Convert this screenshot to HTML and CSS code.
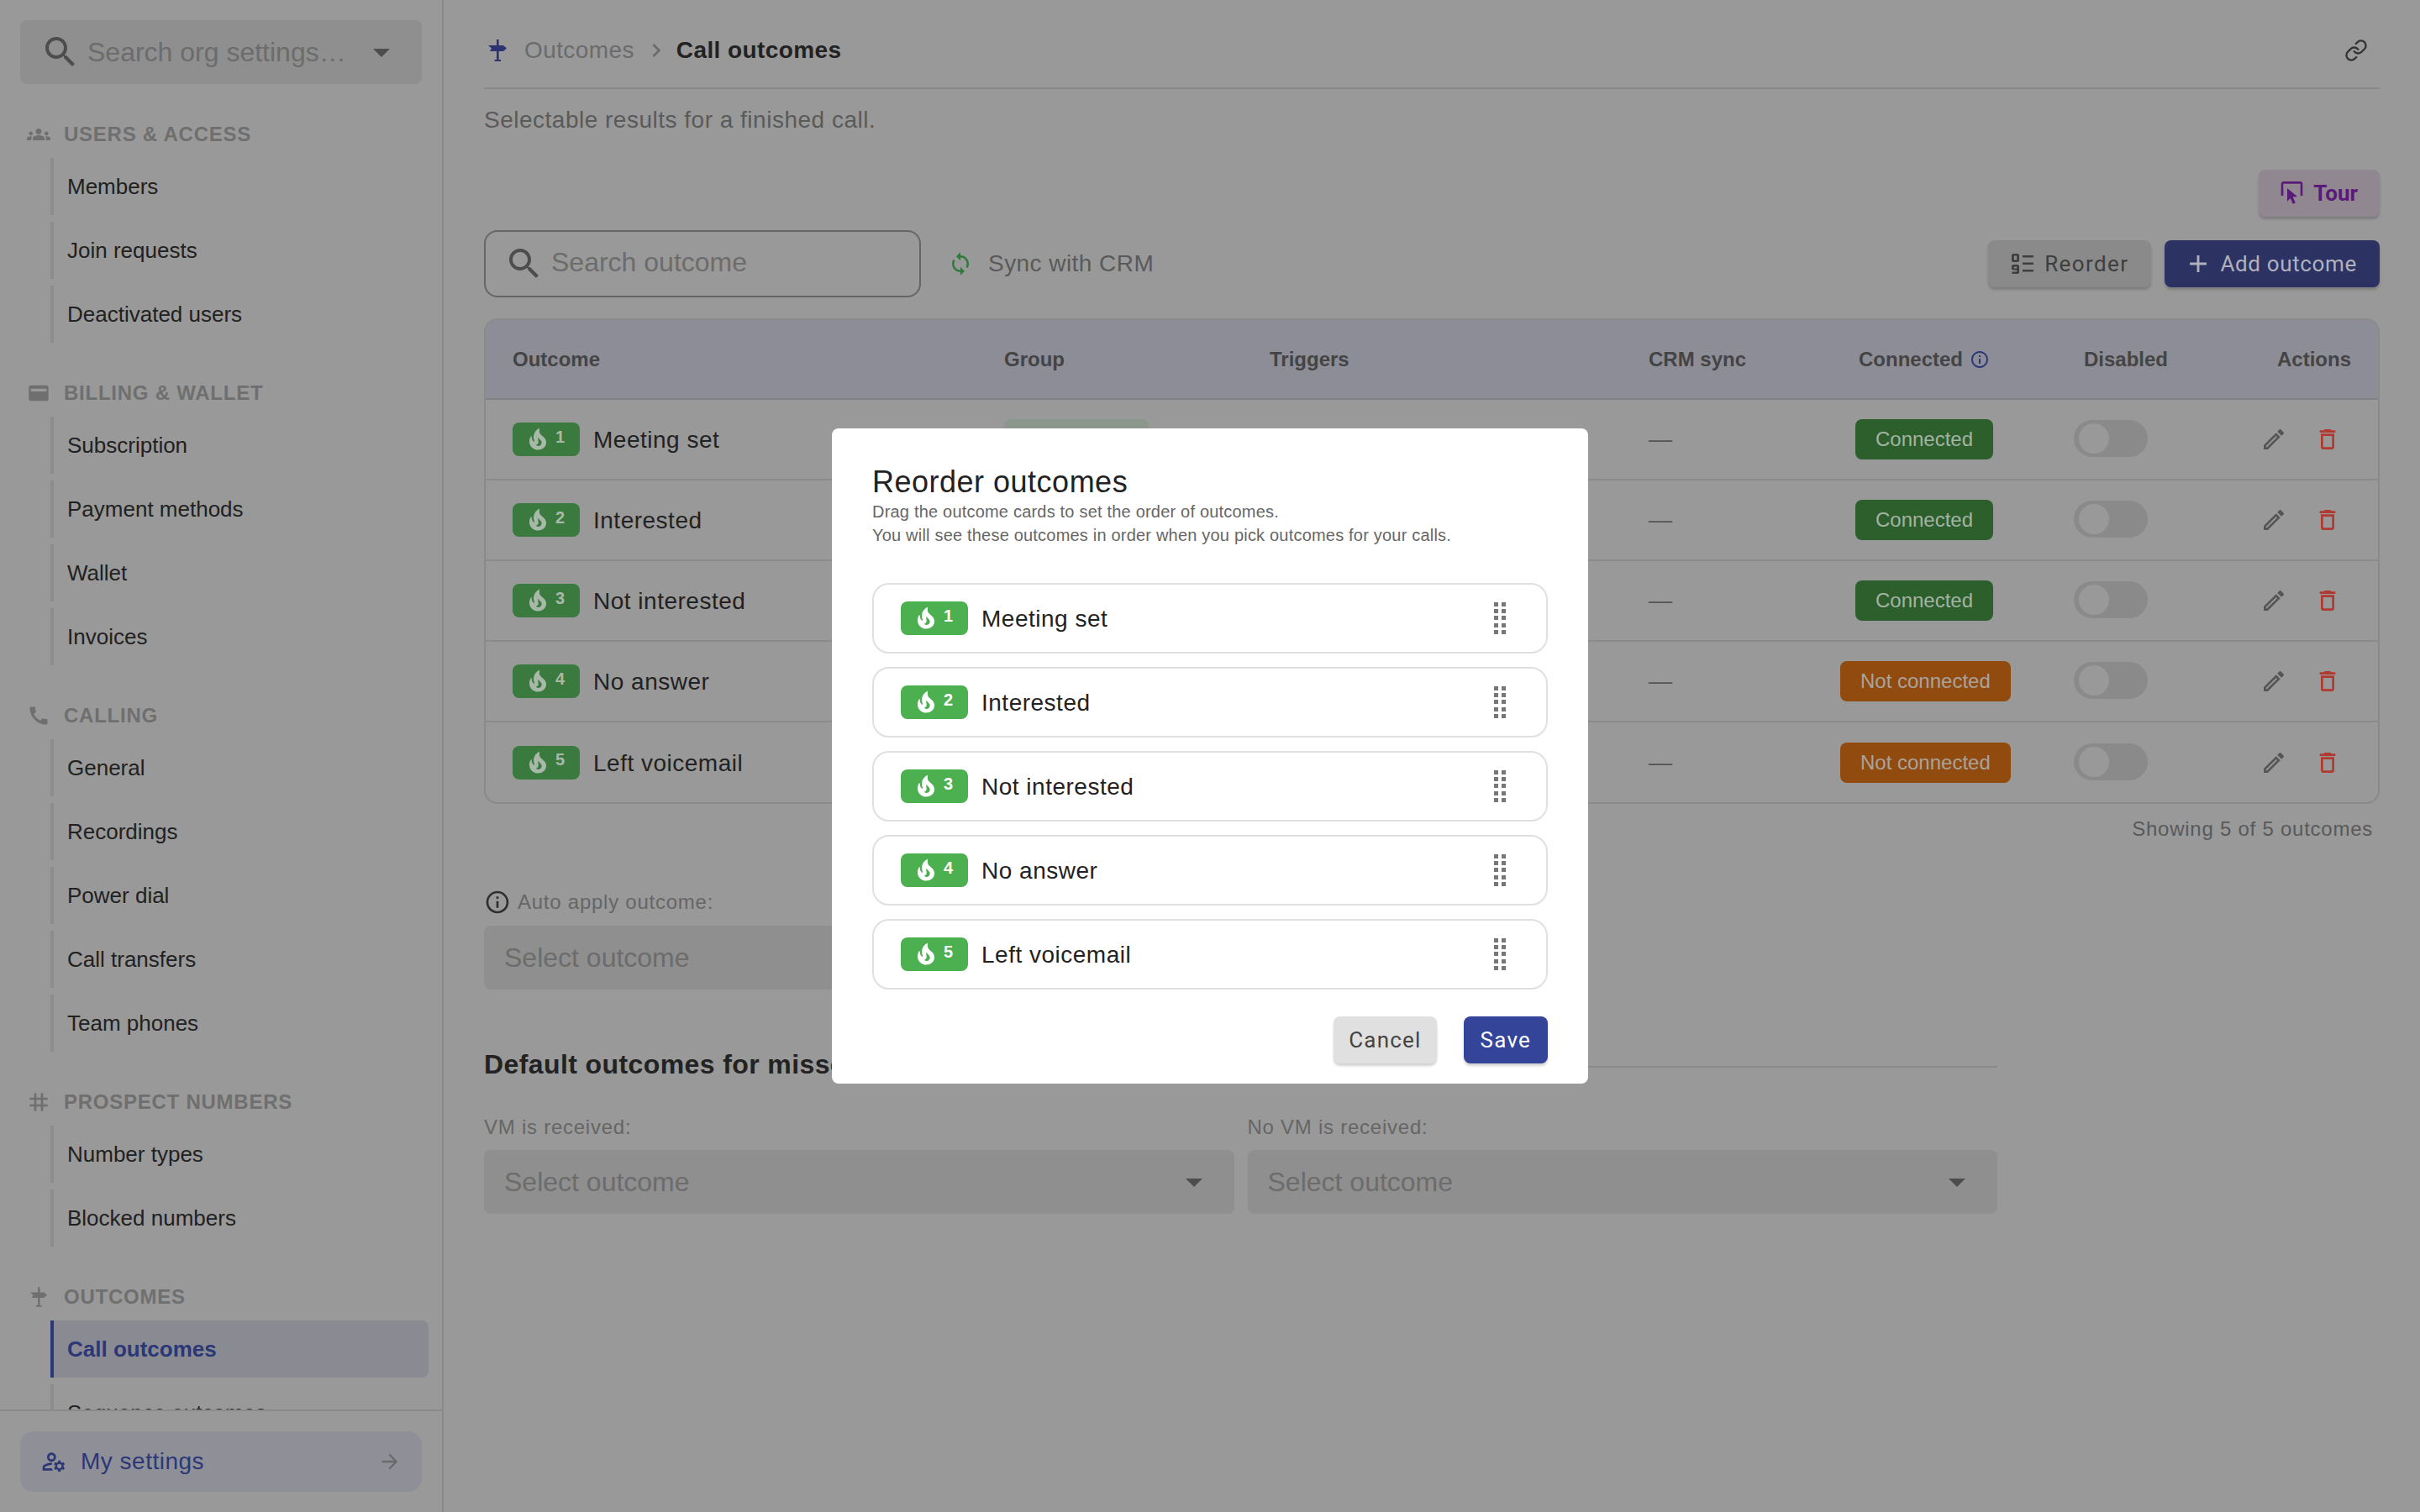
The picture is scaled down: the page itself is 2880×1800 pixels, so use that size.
FILE: index.html
```html
<!DOCTYPE html>
<html lang="en">
<head>
    <meta charset="UTF-8">
    <title>Call outcomes</title>
    <link rel="stylesheet" href="styles.css">
</head>
<body>
    <svg class="sprite" aria-hidden="true">
        <symbol id="i-search" viewBox="0 0 24 24"><path d="M15.5 14h-.79l-.28-.27C15.41 12.59 16 11.11 16 9.5 16 5.91 13.09 3 9.5 3S3 5.91 3 9.5 5.91 16 9.5 16c1.61 0 3.09-.59 4.23-1.57l.27.28v.79l5 4.99L20.49 19l-4.99-5zm-6 0C7.01 14 5 11.99 5 9.5S7.01 5 9.5 5 14 7.01 14 9.5 11.99 14 9.5 14z"/></symbol>
        <symbol id="i-drop" viewBox="0 0 24 24"><path d="M7 10l5 5 5-5z"/></symbol>
        <symbol id="i-groups" viewBox="0 0 24 24"><path d="M12 12.75c1.63 0 3.07.39 4.24.9 1.08.48 1.76 1.56 1.76 2.73V18H6v-1.61c0-1.18.68-2.26 1.76-2.73 1.17-.52 2.61-.91 4.24-.91zM4 13c1.1 0 2-.9 2-2s-.9-2-2-2-2 .9-2 2 .9 2 2 2zm1.13 1.1c-.37-.06-.74-.1-1.13-.1-.99 0-1.93.21-2.78.58C.48 14.9 0 15.62 0 16.43V18h4.5v-1.61c0-.83.23-1.61.63-2.29zM20 13c1.1 0 2-.9 2-2s-.9-2-2-2-2 .9-2 2 .9 2 2 2zm4 3.43c0-.81-.48-1.53-1.22-1.85-.85-.37-1.79-.58-2.78-.58-.39 0-.76.04-1.13.1.4.68.63 1.46.63 2.29V18H24v-1.57zM12 6c1.66 0 3 1.34 3 3s-1.34 3-3 3-3-1.34-3-3 1.34-3 3-3z"/></symbol>
        <symbol id="i-card" viewBox="0 0 24 24"><path fill-rule="evenodd" d="M4 4h16c1.1 0 2 .9 2 2v12c0 1.1-.9 2-2 2H4c-1.1 0-2-.9-2-2V6c0-1.1.9-2 2-2zm0 3.500v2.700h16V7.500z"/></symbol>
        <symbol id="i-call" viewBox="0 0 24 24"><path d="M20.01 15.38c-1.23 0-2.42-.2-3.53-.56-.35-.12-.74-.03-1.01.24l-1.57 1.97c-2.83-1.35-5.48-3.9-6.89-6.83l1.95-1.66c.27-.28.35-.67.24-1.02-.37-1.11-.56-2.3-.56-3.53 0-.54-.45-.99-.99-.99H4.19C3.65 3 3 3.24 3 3.99 3 13.28 10.73 21 20.01 21c.71 0 .99-.63.99-1.18v-3.45c0-.54-.45-.99-.99-.99z"/></symbol>
        <symbol id="i-tag" viewBox="0 0 24 24"><path d="M20 10V8h-4V4h-2v4h-4V4H8v4H4v2h4v4H4v2h4v4h2v-4h4v4h2v-4h4v-2h-4v-4h4zm-6 4h-4v-4h4v4z"/></symbol>
        <symbol id="i-sign" viewBox="0 0 22 26"><path d="M10 0h2.600v7H18l4 3.400L18 14h-5.400v10H15v2H7.600v-2H10V14H2l2-3.600L0 7h10z"/></symbol>
        <symbol id="i-manage" viewBox="0 0 24 24"><path d="M4 18v-.65c0-.34.16-.66.41-.81C6.1 15.53 8.03 15 10 15c.03 0 .05 0 .08.01.1-.7.3-1.37.59-1.98-.22-.02-.44-.03-.67-.03-2.42 0-4.68.67-6.61 1.82-.88.52-1.39 1.5-1.39 2.53V20h9.26c-.42-.6-.75-1.28-.97-2H4zM10 12c2.21 0 4-1.79 4-4s-1.79-4-4-4-4 1.79-4 4 1.79 4 4 4zm0-6c1.1 0 2 .9 2 2s-.9 2-2 2-2-.9-2-2 .9-2 2-2zM20.75 16c0-.22-.03-.42-.06-.63l1.14-1.01-1-1.73-1.45.49c-.32-.27-.68-.48-1.08-.63L18 11h-2l-.3 1.49c-.4.15-.76.36-1.08.63l-1.45-.49-1 1.73 1.14 1.01c-.03.21-.06.41-.06.63s.03.42.06.63l-1.14 1.01 1 1.73 1.45-.49c.32.27.68.48 1.08.63L16 21h2l.3-1.49c.4-.15.76-.36 1.08-.63l1.45.49 1-1.73-1.14-1.01c.03-.21.06-.41.06-.63zM17 18c-1.1 0-2-.9-2-2s.9-2 2-2 2 .9 2 2-.9 2-2 2z"/></symbol>
        <symbol id="i-arrow" viewBox="0 0 24 24"><path d="M12 4l-1.41 1.41L16.17 11H4v2h12.17l-5.58 5.59L12 20l8-8z"/></symbol>
        <symbol id="i-chevron" viewBox="0 0 24 24"><path d="M10 6L8.59 7.41 13.17 12l-4.58 4.59L10 18l6-6z"/></symbol>
        <symbol id="i-link" viewBox="0 0 24 24"><path fill="none" stroke="currentColor" stroke-width="2" stroke-linecap="round" stroke-linejoin="round" d="M10 13a5 5 0 0 0 7.54.54l3-3a5 5 0 0 0-7.07-7.07l-1.72 1.71M14 11a5 5 0 0 0-7.54-.54l-3 3a5 5 0 0 0 7.07 7.07l1.71-1.71"/></symbol>
        <symbol id="i-tour" viewBox="0 0 27 28"><path fill="none" stroke="currentColor" stroke-width="2.6" d="M2 17V3a1.6 1.6 0 0 1 1.6-1.6h19.8A1.6 1.6 0 0 1 25 3v14"/><path d="M8 8l12 10-5.4.6 3.2 6.800-3 1.400-3.200-6.800L8 24z"/></symbol>
        <symbol id="i-sort" viewBox="0 0 26 24"><path fill-rule="evenodd" d="M2 0h5c1 0 2 1 2 2v6c0 1-1 2-2 2H2c-1 0-2-1-2-2V2c0-1 1-2 2-2zm.8 2.400v5.200h3.400V2.400z"/><path fill-rule="evenodd" d="M2 13h5c1 0 2 1 2 2v7c0 1-1 2-2 2H.5v-2.400h5.700v-2H2c-1 0-2-1-2-2v-2.600c0-1 1-2 2-2zm.8 2.400v2.200h3.400v-2.200z"/><path d="M13 2h13v2.500H13zM13 10.500h13V13H13zM13 19h13v2.500H13z"/></symbol>
        <symbol id="i-plus" viewBox="0 0 24 24"><path d="M19 13h-6v6h-2v-6H5v-2h6V5h2v6h6v2z"/></symbol>
        <symbol id="i-sync" viewBox="0 0 24 24"><path d="M12 4V1L8 5l4 4V6c3.31 0 6 2.69 6 6 0 1.01-.25 1.97-.7 2.8l1.46 1.46C19.54 15.03 20 13.57 20 12c0-4.42-3.58-8-8-8zm0 14c-3.31 0-6-2.69-6-6 0-1.01.25-1.97.7-2.8L5.24 7.74C4.46 8.97 4 10.43 4 12c0 4.42 3.58 8 8 8v3l4-4-4-4v3z"/></symbol>
        <symbol id="i-info" viewBox="0 0 24 24"><path d="M11 7h2v2h-2zm0 4h2v6h-2zm1-9C6.48 2 2 6.48 2 12s4.48 10 10 10 10-4.48 10-10S17.52 2 12 2zm0 18c-4.41 0-8-3.59-8-8s3.59-8 8-8 8 3.59 8 8-3.59 8-8 8z"/></symbol>
        <symbol id="i-fire" viewBox="0 0 24 24"><path d="M19.48 12.35c-1.57-4.08-7.16-4.3-5.81-10.23.1-.44-.37-.78-.75-.55C9.29 3.71 6.68 8 8.87 13.62c.18.46-.36.89-.75.59-1.81-1.37-2-3.34-1.84-4.75.06-.52-.62-.77-.91-.34C4.69 10.16 4 11.84 4 14.37c.38 5.6 5.11 7.32 6.81 7.54 2.43.31 5.06-.14 6.95-1.87 2.08-1.93 2.84-5.01 1.72-7.69zm-9.28 5.03c1.44-.35 2.18-1.39 2.38-2.31.33-1.43-.96-2.83-.09-5.09.33 1.87 3.27 3.04 3.27 5.08.08 2.53-2.66 4.7-5.56 2.32z"/></symbol>
        <symbol id="i-edit" viewBox="0 0 24 24"><path d="M14.06 9.02l.92.92L5.92 19H5v-.92l9.06-9.06M17.66 3c-.25 0-.51.1-.7.29l-1.83 1.83 3.75 3.75 1.83-1.83c.39-.39.39-1.02 0-1.41l-2.34-2.34c-.2-.2-.45-.29-.71-.29zm-3.6 3.19L3 17.25V21h3.75L17.81 9.94l-3.75-3.75z"/></symbol>
        <symbol id="i-trash" viewBox="0 0 24 24"><path d="M6 19c0 1.1.9 2 2 2h8c1.1 0 2-.9 2-2V7H6v12zM8 9h8v10H8V9zm7.5-5l-1-1h-5l-1 1H5v2h14V4h-3.5z"/></symbol>
        <symbol id="i-handle" viewBox="0 0 14 38"><path d="M0 0h5v5H0zM9 0h5v5H9zM0 8h5v5H0zM9 8h5v5H9zM0 16h5v5H0zM9 16h5v5H9zM0 25h5v5H0zM9 25h5v5H9zM0 33h5v5H0zM9 33h5v5H9z"/></symbol>
    </svg>

    <div class="layout">
        <!-- Sidebar -->
        <aside class="sidebar">
            <div class="org-search">
                <svg class="icon-48"><use href="#i-search"/></svg>
                <span class="org-search-text">Search org settings…</span>
                <svg class="icon-48"><use href="#i-drop"/></svg>
            </div>
            <nav class="side-nav">
                <section class="nav-group">
                    <h3 class="nav-title"><svg class="icon-28"><use href="#i-groups"/></svg>USERS &amp; ACCESS</h3>
                    <a class="nav-item">Members</a>
                    <a class="nav-item">Join requests</a>
                    <a class="nav-item">Deactivated users</a>
                </section>
                <section class="nav-group">
                    <h3 class="nav-title"><svg class="icon-28"><use href="#i-card"/></svg>BILLING &amp; WALLET</h3>
                    <a class="nav-item">Subscription</a>
                    <a class="nav-item">Payment methods</a>
                    <a class="nav-item">Wallet</a>
                    <a class="nav-item">Invoices</a>
                </section>
                <section class="nav-group">
                    <h3 class="nav-title"><svg class="icon-28"><use href="#i-call"/></svg>CALLING</h3>
                    <a class="nav-item">General</a>
                    <a class="nav-item">Recordings</a>
                    <a class="nav-item">Power dial</a>
                    <a class="nav-item">Call transfers</a>
                    <a class="nav-item">Team phones</a>
                </section>
                <section class="nav-group">
                    <h3 class="nav-title"><svg class="icon-32 icon-tag"><use href="#i-tag"/></svg>PROSPECT NUMBERS</h3>
                    <a class="nav-item">Number types</a>
                    <a class="nav-item">Blocked numbers</a>
                </section>
                <section class="nav-group">
                    <h3 class="nav-title"><svg class="icon-sign-small"><use href="#i-sign"/></svg>OUTCOMES</h3>
                    <a class="nav-item active">Call outcomes</a>
                    <a class="nav-item">Sequence outcomes</a>
                </section>
            </nav>
            <div class="side-footer">
                <a class="my-settings">
                    <svg class="icon-32"><use href="#i-manage"/></svg>
                    <span class="my-settings-text">My settings</span>
                    <svg class="icon-28 my-settings-arrow"><use href="#i-arrow"/></svg>
                </a>
            </div>
        </aside>

        <!-- Main content -->
        <main class="main">
            <header class="page-head">
                <svg class="icon-sign"><use href="#i-sign"/></svg>
                <span class="crumb">Outcomes</span>
                <svg class="icon-32 crumb-sep"><use href="#i-chevron"/></svg>
                <span class="crumb-current">Call outcomes</span>
                <svg class="icon-28 head-link"><use href="#i-link"/></svg>
            </header>
            <p class="subtitle">Selectable results for a finished call.</p>

            <div class="tour-row">
                <button class="btn btn-tour"><svg class="icon-tour"><use href="#i-tour"/></svg>Tour</button>
            </div>

            <div class="toolbar">
                <div class="outcome-search">
                    <svg class="icon-48"><use href="#i-search"/></svg>
                    <span>Search outcome</span>
                </div>
                <div class="sync">
                    <svg class="icon-30"><use href="#i-sync"/></svg>
                    <span>Sync with CRM</span>
                </div>
                <button class="btn btn-grey"><svg class="icon-sort"><use href="#i-sort"/></svg>Reorder</button>
                <button class="btn btn-primary"><svg class="icon-34"><use href="#i-plus"/></svg>Add outcome</button>
            </div>

            <div class="table-wrap">
                <table class="outcomes">
                    <colgroup>
                        <col class="col-outcome"><col class="col-group"><col class="col-triggers"><col class="col-crm"><col class="col-connected"><col class="col-disabled"><col class="col-actions">
                    </colgroup>
                    <thead>
                        <tr>
                            <th>Outcome</th>
                            <th>Group</th>
                            <th>Triggers</th>
                            <th>CRM sync</th>
                            <th class="center"><span class="th-info">Connected<svg class="icon-24"><use href="#i-info"/></svg></span></th>
                            <th class="center">Disabled</th>
                            <th class="right">Actions</th>
                        </tr>
                    </thead>
                    <tbody>
                        <tr>
                            <td><div class="outcome-name"><span class="badge"><svg class="icon-30"><use href="#i-fire"/></svg><b>1</b></span><span>Meeting set</span></div></td>
                            <td><span class="group-chip"></span></td>
                            <td></td>
                            <td class="dash">—</td>
                            <td class="center"><span class="chip chip-on">Connected</span></td>
                            <td class="center"><span class="toggle"></span></td>
                            <td><div class="row-actions"><svg class="icon-32"><use href="#i-edit"/></svg><svg class="icon-32 trash"><use href="#i-trash"/></svg></div></td>
                        </tr>
                        <tr>
                            <td><div class="outcome-name"><span class="badge"><svg class="icon-30"><use href="#i-fire"/></svg><b>2</b></span><span>Interested</span></div></td>
                            <td></td>
                            <td></td>
                            <td class="dash">—</td>
                            <td class="center"><span class="chip chip-on">Connected</span></td>
                            <td class="center"><span class="toggle"></span></td>
                            <td><div class="row-actions"><svg class="icon-32"><use href="#i-edit"/></svg><svg class="icon-32 trash"><use href="#i-trash"/></svg></div></td>
                        </tr>
                        <tr>
                            <td><div class="outcome-name"><span class="badge"><svg class="icon-30"><use href="#i-fire"/></svg><b>3</b></span><span>Not interested</span></div></td>
                            <td></td>
                            <td></td>
                            <td class="dash">—</td>
                            <td class="center"><span class="chip chip-on">Connected</span></td>
                            <td class="center"><span class="toggle"></span></td>
                            <td><div class="row-actions"><svg class="icon-32"><use href="#i-edit"/></svg><svg class="icon-32 trash"><use href="#i-trash"/></svg></div></td>
                        </tr>
                        <tr>
                            <td><div class="outcome-name"><span class="badge"><svg class="icon-30"><use href="#i-fire"/></svg><b>4</b></span><span>No answer</span></div></td>
                            <td></td>
                            <td></td>
                            <td class="dash">—</td>
                            <td class="center"><span class="chip chip-off">Not connected</span></td>
                            <td class="center"><span class="toggle"></span></td>
                            <td><div class="row-actions"><svg class="icon-32"><use href="#i-edit"/></svg><svg class="icon-32 trash"><use href="#i-trash"/></svg></div></td>
                        </tr>
                        <tr>
                            <td><div class="outcome-name"><span class="badge"><svg class="icon-30"><use href="#i-fire"/></svg><b>5</b></span><span>Left voicemail</span></div></td>
                            <td></td>
                            <td></td>
                            <td class="dash">—</td>
                            <td class="center"><span class="chip chip-off">Not connected</span></td>
                            <td class="center"><span class="toggle"></span></td>
                            <td><div class="row-actions"><svg class="icon-32"><use href="#i-edit"/></svg><svg class="icon-32 trash"><use href="#i-trash"/></svg></div></td>
                        </tr>
                    </tbody>
                </table>
            </div>
            <p class="table-count">Showing 5 of 5 outcomes</p>

            <label class="field-label auto-label"><svg class="icon-32 auto-info"><use href="#i-info"/></svg>Auto apply outcome:</label>
            <div class="select auto-select"><span>Select outcome</span><svg class="icon-48"><use href="#i-drop"/></svg></div>

            <div class="default-head">
                <h2 class="default-title">Default outcomes for missed calls</h2>
                <div class="default-line"></div>
            </div>
            <div class="default-grid">
                <div>
                    <label class="field-label">VM is received:</label>
                    <div class="select"><span>Select outcome</span><svg class="icon-48"><use href="#i-drop"/></svg></div>
                </div>
                <div>
                    <label class="field-label">No VM is received:</label>
                    <div class="select"><span>Select outcome</span><svg class="icon-48"><use href="#i-drop"/></svg></div>
                </div>
            </div>
        </main>
    </div>

    <!-- Reorder dialog -->
    <div class="backdrop">
        <div class="modal">
            <h2 class="modal-title">Reorder outcomes</h2>
            <p class="modal-desc">Drag the outcome cards to set the order of outcomes.<br>You will see these outcomes in order when you pick outcomes for your calls.</p>
            <div class="cards">
                <div class="card"><span class="badge badge-live"><svg class="icon-30"><use href="#i-fire"/></svg><b>1</b></span><span class="card-name">Meeting set</span><svg class="icon-handle"><use href="#i-handle"/></svg></div>
                <div class="card"><span class="badge badge-live"><svg class="icon-30"><use href="#i-fire"/></svg><b>2</b></span><span class="card-name">Interested</span><svg class="icon-handle"><use href="#i-handle"/></svg></div>
                <div class="card"><span class="badge badge-live"><svg class="icon-30"><use href="#i-fire"/></svg><b>3</b></span><span class="card-name">Not interested</span><svg class="icon-handle"><use href="#i-handle"/></svg></div>
                <div class="card"><span class="badge badge-live"><svg class="icon-30"><use href="#i-fire"/></svg><b>4</b></span><span class="card-name">No answer</span><svg class="icon-handle"><use href="#i-handle"/></svg></div>
                <div class="card"><span class="badge badge-live"><svg class="icon-30"><use href="#i-fire"/></svg><b>5</b></span><span class="card-name">Left voicemail</span><svg class="icon-handle"><use href="#i-handle"/></svg></div>
            </div>
            <div class="modal-actions">
                <button class="btn btn-cancel">Cancel</button>
                <button class="btn btn-save">Save</button>
            </div>
        </div>
    </div>
</body>
</html>
```
FILE: styles.css
```css
* {
    box-sizing: border-box;
}
body {
    margin: 0;
    height: 100vh;
    overflow: hidden;
    background: #999999;
    color: #222222;
    font-family: "Liberation Sans", Arial, sans-serif;
}
svg {
    fill: currentColor;
    flex: none;
    display: block;
}
.sprite {
    display: none;
}
.icon-24 { width: 24px; height: 24px; }
.icon-28 { width: 28px; height: 28px; }
.icon-30 { width: 30px; height: 30px; }
.icon-32 { width: 32px; height: 32px; }
.icon-34 { width: 34px; height: 34px; }
.icon-48 { width: 48px; height: 48px; }
.icon-sign { width: 22px; height: 26px; color: #2c3370; }
.icon-sign-small { width: 20px; height: 24px; margin: 0 4px; }
.icon-tag { margin: 0 -2px; }
.icon-tour { width: 27px; height: 28px; }
.icon-sort { width: 26px; height: 24px; }
.icon-handle { width: 14px; height: 38px; color: #777777; margin-left: auto; margin-right: 16px; }

.layout {
    display: flex;
    height: 100vh;
}

/* Sidebar */
.sidebar {
    width: 528px;
    flex: none;
    display: flex;
    flex-direction: column;
    border-right: 2px solid #8a8a8a;
}
.org-search {
    flex: none;
    display: flex;
    align-items: center;
    gap: 8px;
    height: 76px;
    margin: 24px 24px 0;
    padding: 0 24px;
    width: 478px;
    border-radius: 8px;
    background: #8f8f8f;
    color: #4d4d4d;
}
.org-search-text {
    flex: 1;
    font-size: 32px;
    color: #6c6c6c;
    white-space: nowrap;
}
.side-nav {
    flex: 1;
    min-height: 0;
    overflow: hidden;
    padding-top: 44px;
}
.nav-group {
    padding-bottom: 36px;
}
.nav-title {
    display: flex;
    align-items: center;
    gap: 16px;
    height: 32px;
    margin: 0 0 12px;
    padding-left: 32px;
    font-size: 24px;
    font-weight: bold;
    letter-spacing: 0.75px;
    color: #6f6f6f;
}
.nav-item {
    display: flex;
    align-items: center;
    width: 450px;
    height: 68px;
    margin: 0 0 8px 60px;
    padding-left: 16px;
    border-left: 4px solid #8c8c8c;
    font-size: 26px;
    color: #212121;
}
.nav-item.active {
    border-left-color: #2d3878;
    border-radius: 0 8px 8px 0;
    background: #8a8b92;
    font-weight: bold;
    color: #2c3776;
}
.side-footer {
    flex: none;
    padding: 24px;
    border-top: 2px solid #8a8a8a;
}
.my-settings {
    display: flex;
    align-items: center;
    gap: 16px;
    width: 478px;
    height: 72px;
    padding: 0 24px;
    border-radius: 16px;
    background: #8f9097;
    color: #2c3776;
}
.my-settings-text {
    flex: 1;
    font-size: 28px;
    letter-spacing: 0.5px;
}
.my-settings-arrow {
    color: #6a6a6a;
}

/* Page */
.main {
    flex: 1;
    min-width: 0;
    padding: 0 48px;
}
.page-head {
    display: flex;
    align-items: center;
    height: 106px;
    padding: 16px 14px 0 5px;
    border-bottom: 2px solid #8a8a8a;
    font-size: 28px;
    letter-spacing: 0.4px;
}
.crumb {
    margin-left: 21px;
    color: #6b6b6b;
}
.crumb-sep {
    margin: 0 8px 0 10px;
    color: #6b6b6b;
}
.crumb-current {
    font-weight: bold;
    color: #222222;
}
.head-link {
    margin-left: auto;
    color: #333333;
}
.subtitle {
    margin: 19px 0 0;
    font-size: 28px;
    line-height: 36px;
    letter-spacing: 0.5px;
    color: #5a5a5a;
}
.tour-row {
    display: flex;
    justify-content: flex-end;
    margin-top: 41px;
}
.btn {
    display: inline-flex;
    align-items: center;
    height: 56px;
    border: none;
    border-radius: 8px;
    font-family: Roboto, "Liberation Sans", sans-serif;
    font-size: 26px;
    box-shadow: 0 3px 3px rgba(0, 0, 0, 0.18);
}
.btn-tour {
    gap: 12px;
    padding: 0 26px;
    background: #918791;
    color: #5a1a78;
    font-weight: 700;
}
.toolbar {
    display: flex;
    align-items: center;
    height: 80px;
    margin-top: 16px;
}
.outcome-search {
    display: flex;
    align-items: center;
    gap: 8px;
    width: 520px;
    height: 80px;
    padding: 0 24px 0 22px;
    border: 2px solid #666666;
    border-radius: 16px;
    font-size: 32px;
    color: #6c6c6c;
}
.outcome-search svg {
    color: #4d4d4d;
}
.outcome-search span {
    margin-top: -4px;
}
.sync {
    display: flex;
    align-items: center;
    gap: 18px;
    margin-left: 32px;
    font-size: 28px;
    letter-spacing: 0.45px;
    color: #5a5a5a;
}
.sync svg {
    color: #2f7a3a;
}
.btn-grey {
    gap: 13px;
    margin-left: auto;
    padding: 0 27px 0 28px;
    background: #8a8a8a;
    color: #3e3e3e;
    letter-spacing: 1.4px;
}
.btn-primary {
    gap: 9px;
    margin-left: 16px;
    padding: 0 27px 0 23px;
    background: #2c3363;
    color: #b0b1bd;
    letter-spacing: 0.65px;
}

/* Table */
.table-wrap {
    margin-top: 25px;
    border: 2px solid #8a8a8a;
    border-radius: 16px;
    overflow: hidden;
}
.outcomes {
    width: 100%;
    table-layout: fixed;
    border-collapse: separate;
    border-spacing: 0;
}
.col-outcome { width: 585px; }
.col-group { width: 316px; }
.col-triggers { width: 451px; }
.col-crm { width: 260px; }
.col-connected { width: 200px; }
.col-disabled { width: 280px; }
.outcomes th {
    height: 95px;
    padding: 0 32px;
    border-bottom: 2px solid #7f7f87;
    background: #8d8d97;
    font-size: 24px;
    font-weight: bold;
    color: #444444;
    text-align: left;
}
.outcomes td {
    height: 96px;
    padding: 0 32px;
    border-bottom: 2px solid #8a8a8a;
    font-size: 28px;
    letter-spacing: 0.5px;
}
.outcomes tbody tr:last-child td {
    height: 95px;
    border-bottom: none;
}
.outcomes .center {
    padding: 0;
    text-align: center;
}
.outcomes .right {
    text-align: right;
}
.th-info {
    display: inline-flex;
    align-items: center;
    justify-content: center;
    gap: 8px;
}
.th-info svg {
    color: #2c3776;
}
.outcome-name {
    display: flex;
    align-items: center;
    gap: 16px;
}
.outcome-name span:last-child {
    margin-top: 2px;
}
.badge {
    display: inline-flex;
    width: 80px;
    height: 40px;
    padding-left: 15px;
    align-items: center;
    gap: 6px;
    border-radius: 8px;
    background: #3b7a3f;
    color: #a9b9a9;
}
.badge b {
    margin-top: -6px;
    font-size: 20px;
    letter-spacing: 0;
}
.badge-live {
    background: #4caf50;
    color: #ffffff;
}
.group-chip {
    display: block;
    width: 172px;
    height: 48px;
    border-radius: 8px;
    background: #8c978c;
}
.dash {
    color: #555555;
}
.chip {
    display: inline-flex;
    align-items: center;
    height: 48px;
    padding: 0 24px;
    border-radius: 8px;
    font-size: 24px;
    letter-spacing: 0;
    white-space: nowrap;
    vertical-align: middle;
}
.chip-on {
    background: #2d5f2d;
    color: #a3b3a3;
}
.chip-off {
    background: #924b0f;
    color: #a9a39d;
}
.toggle {
    position: relative;
    display: block;
    width: 88px;
    height: 44px;
    margin: -2px 0 0 78px;
    border-radius: 22px;
    background: #8a8a8a;
}
.toggle::after {
    content: "";
    position: absolute;
    top: 4px;
    left: 6px;
    width: 36px;
    height: 36px;
    border-radius: 50%;
    background: #999999;
}
.row-actions {
    display: flex;
    gap: 32px;
    margin-left: -12px;
    color: #555555;
}
.trash {
    color: #b03a32;
}
.table-count {
    margin: 12px 0 0;
    padding-right: 8px;
    font-size: 24px;
    line-height: 36px;
    letter-spacing: 0.75px;
    text-align: right;
    color: #595959;
}

/* Bottom form */
.field-label {
    display: flex;
    align-items: center;
    height: 32px;
    font-size: 24px;
    letter-spacing: 0.75px;
    color: #666666;
}
.auto-label {
    gap: 8px;
    margin-top: 53px;
    margin-bottom: 12px;
}
.auto-info {
    color: #2f2f2f;
}
.select {
    display: flex;
    align-items: center;
    justify-content: space-between;
    height: 76px;
    padding: 0 24px;
    border-radius: 8px;
    background: #8f8f8f;
    font-size: 32px;
    color: #6c6c6c;
}
.select svg {
    color: #4d4d4d;
}
.auto-select {
    width: 892px;
}
.default-head {
    display: flex;
    align-items: center;
    gap: 16px;
    width: 1801px;
    margin-top: 69px;
}
.default-title {
    margin: 0;
    padding-bottom: 6px;
    font-size: 32px;
    line-height: 40px;
    letter-spacing: 0.4px;
    font-weight: bold;
    color: #222222;
}
.default-line {
    flex: 1;
    height: 2px;
    background: #8a8a8a;
}
.default-grid {
    display: grid;
    grid-template-columns: 892.5px 892.5px;
    gap: 16px;
    margin-top: 33px;
}
.default-grid .field-label {
    margin-bottom: 11px;
}

/* Reorder dialog */
.backdrop {
    position: fixed;
    top: 0;
    left: 0;
    width: 100%;
    height: 100%;
    display: flex;
    align-items: center;
    justify-content: center;
}
.modal {
    width: 900px;
    padding: 42px 48px 24px;
    border-radius: 8px;
    background: #ffffff;
}
.modal-title {
    margin: 0;
    font-size: 36px;
    line-height: 43px;
    font-weight: normal;
    letter-spacing: 0.5px;
    color: #222222;
}
.modal-desc {
    margin: 0 0 43px;
    font-size: 20px;
    line-height: 28px;
    letter-spacing: 0.2px;
    color: #666666;
}
.cards {
    display: flex;
    flex-direction: column;
    gap: 16px;
}
.card {
    display: flex;
    align-items: center;
    height: 84px;
    padding: 0 32px;
    border: 2px solid #e0e0e0;
    border-radius: 20px;
}
.card-name {
    margin-left: 16px;
    margin-top: 2px;
    font-size: 28px;
    letter-spacing: 0.5px;
    color: #222222;
}
.modal-actions {
    display: flex;
    justify-content: flex-end;
    gap: 32px;
    margin-top: 32px;
}
.btn-cancel {
    padding: 0 18px;
    background: #e0e0e0;
    color: #444444;
    letter-spacing: 1.2px;
}
.btn-save {
    padding: 0 20px;
    background: #334499;
    color: #ffffff;
    letter-spacing: 1.2px;
}
```
